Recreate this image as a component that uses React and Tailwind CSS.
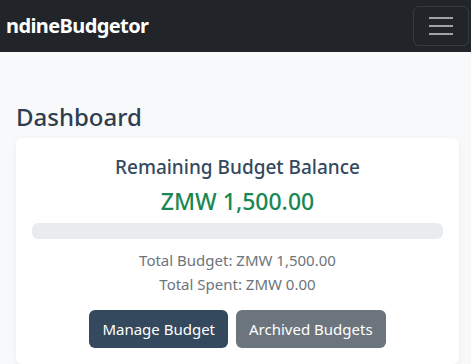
import React from 'react';

export default function App() {
  return (
    <div className="min-h-[364px] bg-[#f8f9fa] font-['Noto_Sans',sans-serif]">
      <nav className="h-[52px] bg-[#212529] flex items-center justify-between pl-[6px] pr-[2px]">
        <span className="text-white font-bold text-[20px] tracking-[-0.6px]">ndineBudgetor</span>
        <button className="w-[56px] h-[40px] border border-white/10 rounded-[6px] flex flex-col items-center justify-center gap-[6px]">
          <span className="block w-[24px] h-[2px] bg-[#a0a2a4]" />
          <span className="block w-[24px] h-[2px] bg-[#a0a2a4]" />
          <span className="block w-[24px] h-[2px] bg-[#a0a2a4]" />
        </button>
      </nav>

      <main className="pl-[16px] pr-[12px] pt-[51px]">
        <h2 className="text-[24px] font-medium text-[#2c3e50] leading-[1.2] mb-[6px]">Dashboard</h2>
        <div className="bg-white rounded-[6px] shadow-[0_2px_6px_rgba(0,0,0,0.06)] px-[16px] pt-[18px] pb-[16px] text-center">
          <h5 className="text-[19px] font-medium text-[#34495e] leading-[1.2]">Remaining Budget Balance</h5>
          <div className="text-[23px] font-medium text-[#198754] leading-[1.2] mt-[9px]">ZMW 1,500.00</div>
          <div className="h-[16px] bg-[#e9ecef] rounded-[6px] mt-[8px]" />
          <p className="text-[15px] text-[#6c757d] leading-[24px] mt-[9px]">Total Budget: ZMW 1,500.00</p>
          <p className="text-[15px] text-[#6c757d] leading-[24px]">Total Spent: ZMW 0.00</p>
          <div className="flex justify-center gap-[8px] mt-[14px]">
            <button className="h-[38px] px-[13px] rounded-[6px] bg-[#34495e] text-white text-[15px]">Manage Budget</button>
            <button className="h-[38px] px-[13px] rounded-[6px] bg-[#6c757d] text-white text-[15px]">Archived Budgets</button>
          </div>
        </div>
      </main>
    </div>
  );
}
